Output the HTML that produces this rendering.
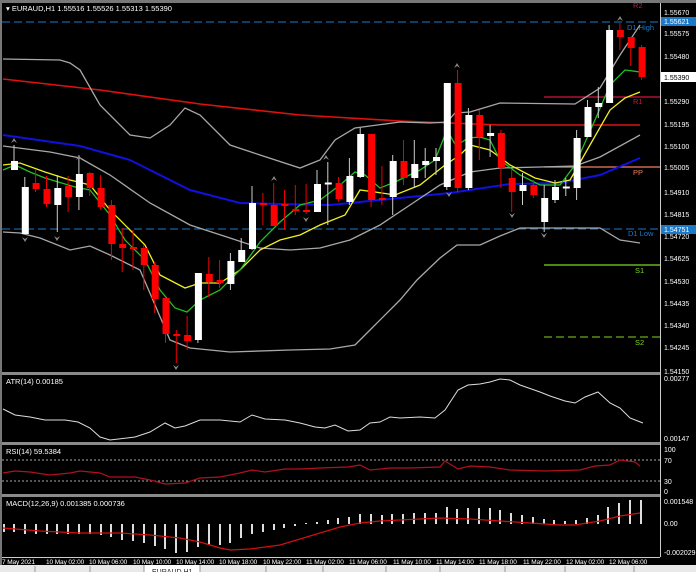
<!DOCTYPE html>
<html><head><meta charset="utf-8"><style>
html,body{margin:0;padding:0;background:#000;width:696px;height:572px;overflow:hidden}
svg{display:block}
text{font-family:"Liberation Sans","DejaVu Sans",sans-serif;font-size:7.5px;fill:#fff}
.ax{font-size:7px}
.tx{font-size:6.5px;letter-spacing:-0.1px}
</style></head><body>
<svg width="696" height="572" viewBox="0 0 696 572" xmlns="http://www.w3.org/2000/svg">
<rect width="696" height="572" fill="#000"/>
<rect x="0" y="0" width="696" height="3" fill="#777"/>
<rect x="0" y="0" width="2" height="565" fill="#777"/>
<line x1="660.5" y1="3" x2="660.5" y2="557" stroke="#ccc" stroke-width="1"/>
<rect x="2" y="372" width="658" height="3" fill="#8a8a8a"/>
<rect x="2" y="442" width="658" height="3" fill="#8a8a8a"/>
<rect x="2" y="494" width="658" height="3" fill="#8a8a8a"/>
<line x1="2" y1="557.5" x2="660" y2="557.5" stroke="#ccc"/>

<line x1="2" y1="22" x2="660" y2="22" stroke="#1e78c8" stroke-dasharray="8,4"/>
<line x1="2" y1="229" x2="660" y2="229" stroke="#1e78c8" stroke-dasharray="8,4"/>
<line x1="544" y1="97" x2="660" y2="97" stroke="#d2143c" stroke-width="1.3"/>
<line x1="544" y1="167" x2="660" y2="167" stroke="#f08060" stroke-width="1.3"/>
<line x1="544" y1="265" x2="660" y2="265" stroke="#7fd620" stroke-width="1.3"/>
<line x1="544" y1="337" x2="660" y2="337" stroke="#7fd620" stroke-dasharray="8,4"/>
<text x="633" y="8" style="fill:#d2143c">R2</text>
<text x="627" y="30" style="fill:#1e78c8">D1 High</text>
<text x="633" y="104" style="fill:#d2143c">R1</text>
<text x="633" y="175" style="fill:#f08060">PP</text>
<text x="628" y="236" style="fill:#1e78c8">D1 Low</text>
<text x="635" y="273" style="fill:#7fd620">S1</text>
<text x="635" y="345" style="fill:#7fd620">S2</text>

<polyline fill="none" stroke="#e01010" stroke-width="1.6" points="3,79 100,90 200,104 300,115 400,121 500,125 640,125"/>
<polyline fill="none" stroke="#1010e0" stroke-width="2" points="3,135 80,146 130,160 190,190 240,203 280,204 330,205 400,198 450,193 510,184 560,183 600,175 640,158"/>
<polyline fill="none" stroke="#a8a8a8" stroke-width="1.3" points="3,59 60,60 70,63 80,70 100,105 130,135 150,138 170,125 185,108 200,115 230,145 260,155 300,168 320,160 335,140 355,128 400,122 430,123 447,122 455,113 470,112 500,103 575,104 600,88 620,55 640,25"/>
<polyline fill="none" stroke="#a8a8a8" stroke-width="1.3" points="3,146 50,152 80,158 110,175 150,203 190,225 230,238 260,248 290,250 320,248 350,240 380,225 410,205 440,185 470,172 500,168 540,167 575,166 600,157 640,135"/>
<polyline fill="none" stroke="#a8a8a8" stroke-width="1.3" points="3,232 20,233 40,238 70,250 90,246 110,255 140,270 170,340 190,348 230,352 290,350 330,349 355,345 370,330 400,300 417,280 440,258 457,245 480,245 500,236 520,228 600,228 620,240 640,243"/>
<polyline fill="none" stroke="#f0f020" stroke-width="1.3" points="3,165 20,163 45,172 70,180 90,185 110,210 130,230 145,245 160,275 185,288 200,283 220,283 240,270 260,250 280,240 300,235 320,225 345,215 360,190 375,192 395,195 420,185 445,165 460,155 470,145 490,150 510,165 535,178 555,183 570,180 590,145 610,110 625,98 640,92"/>
<polyline fill="none" stroke="#20c020" stroke-width="1.3" points="3,170 15,165 30,172 45,178 75,187 90,190 110,215 125,240 145,260 160,290 175,308 187,312 200,300 220,290 240,270 260,242 280,222 300,205 320,200 340,185 355,172 365,175 380,188 395,182 420,170 435,160 447,130 456,146 468,138 480,137 490,140 500,160 520,175 540,185 560,185 575,165 595,120 610,85 625,70 640,72"/>

<g stroke-width="1">
<g stroke="#ccc">
<line x1="14" y1="145" x2="14" y2="170"/><line x1="24.8" y1="177" x2="24.8" y2="234"/><line x1="57.3" y1="175" x2="57.3" y2="232"/><line x1="78.9" y1="155" x2="78.9" y2="210"/><line x1="197.9" y1="273" x2="197.9" y2="343"/><line x1="230.4" y1="253" x2="230.4" y2="290"/><line x1="241.2" y1="238" x2="241.2" y2="262"/><line x1="252" y1="186" x2="252" y2="250"/><line x1="317" y1="170" x2="317" y2="212"/><line x1="327.8" y1="162" x2="327.8" y2="225"/><line x1="349.4" y1="158" x2="349.4" y2="205"/><line x1="360.2" y1="128" x2="360.2" y2="178"/><line x1="392.7" y1="155" x2="392.7" y2="215"/><line x1="414.3" y1="140" x2="414.3" y2="188"/><line x1="425.2" y1="148" x2="425.2" y2="178"/><line x1="436" y1="148" x2="436" y2="175"/><line x1="446.8" y1="83" x2="446.8" y2="190"/><line x1="468.4" y1="108" x2="468.4" y2="190"/><line x1="490.1" y1="125" x2="490.1" y2="157"/><line x1="522.5" y1="173" x2="522.5" y2="205"/><line x1="544.2" y1="185" x2="544.2" y2="232"/><line x1="555" y1="180" x2="555" y2="203"/><line x1="565.8" y1="178" x2="565.8" y2="196"/><line x1="576.6" y1="130" x2="576.6" y2="200"/><line x1="587.5" y1="100" x2="587.5" y2="137"/><line x1="598.3" y1="87" x2="598.3" y2="118"/><line x1="609.1" y1="25" x2="609.1" y2="103"/>
</g>
<g stroke="#e00">
<line x1="35.6" y1="170" x2="35.6" y2="192"/><line x1="46.5" y1="176" x2="46.5" y2="207"/><line x1="68.1" y1="176" x2="68.1" y2="212"/><line x1="89.7" y1="172" x2="89.7" y2="196"/><line x1="100.6" y1="175" x2="100.6" y2="210"/><line x1="111.4" y1="200" x2="111.4" y2="260"/><line x1="122.2" y1="228" x2="122.2" y2="272"/><line x1="133" y1="230" x2="133" y2="270"/><line x1="143.8" y1="245" x2="143.8" y2="290"/><line x1="154.7" y1="262" x2="154.7" y2="313"/><line x1="165.5" y1="298" x2="165.5" y2="343"/><line x1="176.3" y1="330" x2="176.3" y2="363"/><line x1="187.1" y1="316" x2="187.1" y2="350"/><line x1="208.8" y1="257" x2="208.8" y2="297"/><line x1="219.6" y1="260" x2="219.6" y2="288"/><line x1="262.9" y1="193" x2="262.9" y2="225"/><line x1="273.7" y1="183" x2="273.7" y2="226"/><line x1="284.5" y1="190" x2="284.5" y2="230"/><line x1="295.3" y1="185" x2="295.3" y2="215"/><line x1="306.1" y1="184" x2="306.1" y2="214"/><line x1="338.6" y1="177" x2="338.6" y2="202"/><line x1="371.1" y1="134" x2="371.1" y2="207"/><line x1="381.9" y1="166" x2="381.9" y2="205"/><line x1="403.5" y1="140" x2="403.5" y2="185"/><line x1="457.6" y1="70" x2="457.6" y2="192"/><line x1="479.3" y1="110" x2="479.3" y2="160"/><line x1="500.9" y1="130" x2="500.9" y2="188"/><line x1="511.7" y1="170" x2="511.7" y2="212"/><line x1="533.4" y1="180" x2="533.4" y2="198"/><line x1="619.9" y1="23" x2="619.9" y2="50"/><line x1="630.7" y1="37" x2="630.7" y2="66"/><line x1="641.6" y1="45" x2="641.6" y2="80"/>
</g>
<g fill="#fff">
<rect x="11" y="161" width="7" height="9"/><rect x="21.8" y="187" width="7" height="47"/><rect x="54.3" y="188" width="7" height="17"/><rect x="75.9" y="174" width="7" height="23"/><rect x="194.9" y="273" width="7" height="67"/><rect x="227.4" y="261" width="7" height="23"/><rect x="238.2" y="250" width="7" height="12"/><rect x="249" y="203" width="7" height="46"/><rect x="314" y="184" width="7" height="28"/><rect x="324.8" y="182.5" width="7" height="2"/><rect x="346.4" y="176" width="7" height="26"/><rect x="357.2" y="134" width="7" height="43"/><rect x="389.7" y="161" width="7" height="36"/><rect x="411.3" y="164" width="7" height="14"/><rect x="422.2" y="161" width="7" height="4"/><rect x="433" y="157" width="7" height="4"/><rect x="443.8" y="83" width="7" height="104"/><rect x="465.4" y="115" width="7" height="73"/><rect x="487.1" y="133" width="7" height="3"/><rect x="519.5" y="185" width="7" height="6"/><rect x="541.2" y="198" width="7" height="24"/><rect x="552" y="187" width="7" height="13"/><rect x="562.8" y="186.5" width="7" height="2"/><rect x="573.6" y="138" width="7" height="50"/><rect x="584.5" y="107" width="7" height="30"/><rect x="595.3" y="103" width="7" height="4"/><rect x="606.1" y="30" width="7" height="73"/>
</g>
<g fill="#f00">
<rect x="32.6" y="183" width="7" height="6"/><rect x="43.5" y="189" width="7" height="15"/><rect x="65.1" y="186" width="7" height="11"/><rect x="86.7" y="173" width="7" height="15"/><rect x="97.6" y="188" width="7" height="19"/><rect x="108.4" y="205" width="7" height="39"/><rect x="119.2" y="244" width="7" height="4"/><rect x="130" y="247" width="7" height="2"/><rect x="140.8" y="248" width="7" height="17"/><rect x="151.7" y="265" width="7" height="34"/><rect x="162.5" y="298" width="7" height="36"/><rect x="173.3" y="334" width="7" height="2"/><rect x="184.1" y="335" width="7" height="6"/><rect x="205.8" y="274" width="7" height="8"/><rect x="216.6" y="280" width="7" height="3"/><rect x="259.9" y="203" width="7" height="2"/><rect x="270.7" y="205" width="7" height="21"/><rect x="281.5" y="204" width="7" height="2"/><rect x="292.3" y="209" width="7" height="2"/><rect x="303.1" y="210" width="7" height="2"/><rect x="335.6" y="183" width="7" height="16"/><rect x="368.1" y="134" width="7" height="66"/><rect x="378.9" y="198" width="7" height="2"/><rect x="400.5" y="161" width="7" height="17"/><rect x="454.6" y="83" width="7" height="105"/><rect x="476.3" y="115" width="7" height="22"/><rect x="497.9" y="133" width="7" height="35"/><rect x="508.7" y="178" width="7" height="14"/><rect x="530.4" y="185" width="7" height="10"/><rect x="616.9" y="30" width="7" height="7"/><rect x="627.7" y="37" width="7" height="11"/><rect x="638.6" y="47" width="7" height="30"/>
</g>
</g>
<g fill="#888">
<path d="M11,143 l3,-5 l3,5 l-3,-2z"/><path d="M76,160 l3,-5 l3,5 l-3,-2z"/><path d="M271,181 l3,-5 l3,5 l-3,-2z"/><path d="M454,68 l3,-5 l3,5 l-3,-2z"/><path d="M617,21 l3,-5 l3,5 l-3,-2z"/><path d="M323,160 l3,-5 l3,5 l-3,-2z"/>
<path d="M22,237 l3,5 l3,-5 l-3,2z"/><path d="M54,236 l3,5 l3,-5 l-3,2z"/><path d="M173,365 l3,5 l3,-5 l-3,2z"/><path d="M303,217 l3,5 l3,-5 l-3,2z"/><path d="M509,213 l3,5 l3,-5 l-3,2z"/><path d="M541,233 l3,5 l3,-5 l-3,2z"/><path d="M446,192 l3,5 l3,-5 l-3,2z"/>
</g>

<g class="ax">
<text class="ax" x="664" y="15">1.55670</text>
<rect x="661" y="17" width="35" height="9" fill="#1e78c8"/><text class="ax" x="664" y="24">1.55621</text>
<text class="ax" x="664" y="36">1.55575</text>
<text class="ax" x="664" y="59">1.55480</text>
<rect x="661" y="72" width="35" height="10" fill="#fff"/><text class="ax" x="664" y="80" style="fill:#000">1.55390</text>
<text class="ax" x="664" y="104">1.55290</text>
<text class="ax" x="664" y="127">1.55195</text>
<text class="ax" x="664" y="149">1.55100</text>
<text class="ax" x="664" y="170">1.55005</text>
<text class="ax" x="664" y="195">1.54910</text>
<text class="ax" x="664" y="217">1.54815</text>
<rect x="661" y="225" width="35" height="9" fill="#1e78c8"/><text class="ax" x="664" y="232">1.54751</text>
<text class="ax" x="664" y="239">1.54720</text>
<text class="ax" x="664" y="261">1.54625</text>
<text class="ax" x="664" y="284">1.54530</text>
<text class="ax" x="664" y="306">1.54435</text>
<text class="ax" x="664" y="328">1.54340</text>
<text class="ax" x="664" y="350">1.54245</text>
<text class="ax" x="664" y="374">1.54150</text>
<text class="ax" x="664" y="381">0.00277</text>
<text class="ax" x="664" y="441">0.00147</text>
<text class="ax" x="664" y="452">100</text>
<text class="ax" x="664" y="463">70</text>
<text class="ax" x="664" y="484">30</text>
<text class="ax" x="664" y="494">0</text>
<text class="ax" x="664" y="504">0.001548</text>
<text class="ax" x="664" y="526">0.00</text>
<text class="ax" x="664" y="555">-0.002029</text>
</g>

<text x="6" y="11">▾ EURAUD,H1  1.55516 1.55526 1.55313 1.55390</text>
<text x="6" y="384">ATR(14) 0.00185</text>
<text x="6" y="454">RSI(14) 59.5384</text>
<text x="6" y="506">MACD(12,26,9) 0.001385 0.000736</text>

<polyline fill="none" stroke="#ddd" stroke-width="1" points="3,409 15,415 30,417 45,420 65,420 78,422 90,428 100,437 110,440 135,437 150,432 165,423 175,428 185,426 200,420 220,420 240,422 252,415 265,419 285,420 300,423 315,427 325,428 335,425 348,431 360,430 370,423 380,422 390,417 400,418 420,417 435,418 445,410 458,390 468,385 480,384 490,382 500,379 510,380 520,385 540,392 550,396 565,401 575,403 585,397 598,392 610,403 620,408 630,418 643,423"/>
<line x1="2" y1="460" x2="660" y2="460" stroke="#aaa" stroke-dasharray="2,2"/>
<line x1="2" y1="481" x2="660" y2="481" stroke="#aaa" stroke-dasharray="2,2"/>
<polyline fill="none" stroke="#b01020" stroke-width="1.2" points="3,473 15,471 30,472 50,475 70,473 80,471 100,473 110,477 135,477 150,480 165,484 185,483 200,478 220,477 240,473 252,470 265,472 285,469 300,469 320,468 348,467 360,465 370,470 390,468 410,468 440,467 445,461 458,469 470,466 490,467 510,470 545,471 580,470 595,466 610,465 620,460 635,462 640,466"/>
<g fill="#ddd">
<rect x="3" y="524" width="2" height="8"/><rect x="13" y="524" width="2" height="8"/><rect x="24" y="524" width="2" height="10"/><rect x="35" y="524" width="2" height="10"/><rect x="46" y="524" width="2" height="10"/><rect x="56" y="524" width="2" height="10"/><rect x="67" y="524" width="2" height="10"/><rect x="78" y="524" width="2" height="10"/><rect x="89" y="524" width="2" height="10"/><rect x="100" y="524" width="2" height="11"/><rect x="110" y="524" width="2" height="13"/><rect x="121" y="524" width="2" height="16"/><rect x="132" y="524" width="2" height="17"/><rect x="143" y="524" width="2" height="19"/><rect x="154" y="524" width="2" height="22"/><rect x="164" y="524" width="2" height="25"/><rect x="175" y="524" width="2" height="29"/><rect x="186" y="524" width="2" height="28"/><rect x="197" y="524" width="2" height="23"/><rect x="208" y="524" width="2" height="21"/><rect x="219" y="524" width="2" height="21"/><rect x="229" y="524" width="2" height="19"/><rect x="240" y="524" width="2" height="14"/><rect x="251" y="524" width="2" height="10"/><rect x="262" y="524" width="2" height="8"/><rect x="273" y="524" width="2" height="6"/><rect x="283" y="524" width="2" height="4"/><rect x="294" y="524" width="2" height="2"/><rect x="305" y="523" width="2" height="1"/><rect x="316" y="522" width="2" height="2"/><rect x="327" y="520" width="2" height="4"/><rect x="337" y="518" width="2" height="6"/>
<rect x="348" y="517" width="2" height="7"/><rect x="359" y="514" width="2" height="10"/><rect x="370" y="514" width="2" height="10"/><rect x="381" y="515" width="2" height="9"/><rect x="391" y="514" width="2" height="10"/><rect x="402" y="514" width="2" height="10"/><rect x="413" y="513" width="2" height="11"/><rect x="424" y="513" width="2" height="11"/><rect x="435" y="513" width="2" height="11"/><rect x="446" y="507" width="2" height="17"/><rect x="456" y="509" width="2" height="15"/><rect x="467" y="508" width="2" height="16"/><rect x="478" y="508" width="2" height="16"/><rect x="489" y="508" width="2" height="16"/><rect x="499" y="510" width="2" height="14"/><rect x="510" y="513" width="2" height="11"/><rect x="521" y="515" width="2" height="9"/><rect x="532" y="517" width="2" height="7"/><rect x="543" y="519" width="2" height="5"/><rect x="553" y="520" width="2" height="4"/><rect x="564" y="521" width="2" height="3"/><rect x="575" y="520" width="2" height="4"/><rect x="586" y="518" width="2" height="6"/><rect x="597" y="515" width="2" height="9"/><rect x="607" y="507" width="2" height="17"/><rect x="618" y="503" width="2" height="21"/><rect x="629" y="500" width="2" height="24"/><rect x="640" y="500" width="2" height="24"/>
</g>
<polyline fill="none" stroke="#d01010" stroke-width="1.2" points="3,528 40,531 80,533 120,533 150,535 180,538 200,542 220,548 230,550 250,549 280,545 310,536 340,527 360,523 380,521 420,519 440,518 470,519 500,521 530,523 560,525 575,525 600,521 620,516 640,513"/>

<g>
<text class="tx" x="2" y="564">7 May 2021</text>
<text class="tx" x="46" y="564">10 May 02:00</text>
<text class="tx" x="89" y="564">10 May 06:00</text>
<text class="tx" x="133" y="564">10 May 10:00</text>
<text class="tx" x="176" y="564">10 May 14:00</text>
<text class="tx" x="219" y="564">10 May 18:00</text>
<text class="tx" x="263" y="564">10 May 22:00</text>
<text class="tx" x="306" y="564">11 May 02:00</text>
<text class="tx" x="349" y="564">11 May 06:00</text>
<text class="tx" x="393" y="564">11 May 10:00</text>
<text class="tx" x="436" y="564">11 May 14:00</text>
<text class="tx" x="479" y="564">11 May 18:00</text>
<text class="tx" x="523" y="564">11 May 22:00</text>
<text class="tx" x="566" y="564">12 May 02:00</text>
<text class="tx" x="609" y="564">12 May 06:00</text>
</g>
<rect x="0" y="565" width="696" height="7" fill="#e8e8e8"/>
<rect x="144" y="565" width="56" height="7" fill="#fff"/>
<g stroke="#999"><line x1="35" y1="566" x2="35" y2="572"/><line x1="90" y1="566" x2="90" y2="572"/><line x1="144" y1="565" x2="144" y2="572"/><line x1="200" y1="565" x2="200" y2="572"/><line x1="266" y1="566" x2="266" y2="572"/><line x1="323" y1="566" x2="323" y2="572"/><line x1="386" y1="566" x2="386" y2="572"/><line x1="440" y1="566" x2="440" y2="572"/><line x1="505" y1="566" x2="505" y2="572"/><line x1="565" y1="566" x2="565" y2="572"/><line x1="634" y1="566" x2="634" y2="572"/></g>
<text x="152" y="574" style="fill:#222;font-size:7px">EURAUD,H1</text>
</svg>
</body></html>
